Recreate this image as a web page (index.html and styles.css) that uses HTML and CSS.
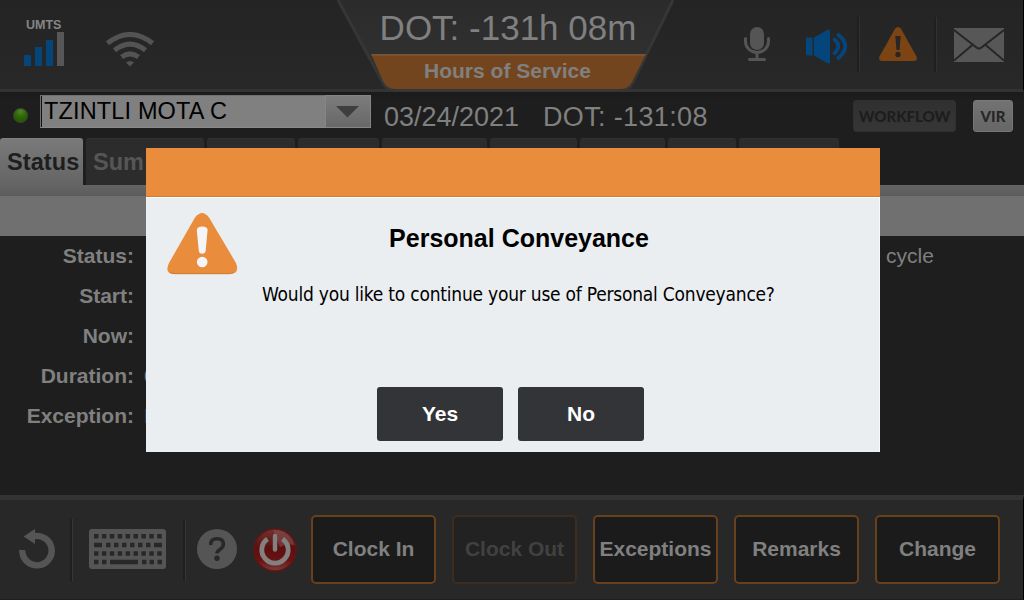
FILE: index.html
```html
<!DOCTYPE html>
<html lang="en">
<head>
<meta charset="utf-8">
<title>Hours of Service</title>
<link rel="stylesheet" href="styles.css">
</head>
<body>
<div class="screen">
  <header class="topbar">
    <div class="top-left">
      <div class="signal">
        <span class="signal-label">UMTS</span>
        <svg width="42" height="34" viewBox="0 0 42 34"><path fill="#04467c" d="M0 23h7v11H0zM11 15h7v19h-7zM22 8h7v26h-7z"/><path fill="#575757" d="M33 0h7v34h-7z"/></svg>
      </div>
      <svg class="wifi" width="48" height="35" viewBox="0 0 48 35"><g fill="none" stroke="#535353" stroke-width="5"><path d="M1.500 11.300Q24 -6.300 46.500 11.300"/><path d="M8.500 18.300Q24 6 39.500 18.300"/><path d="M15.500 25Q24 18.800 32.500 25"/></g><path fill="#535353" d="M20 30.500Q24 27.500 28 30.500L24 34.500z"/></svg>
    </div>
    <div class="top-center">
      <svg class="plate" width="345" height="92" viewBox="0 0 345 92">
        <defs><linearGradient id="pg" x1="0" y1="0" x2="0" y2="1"><stop offset="0" stop-color="#2b2b2b"/><stop offset="1" stop-color="#333"/></linearGradient></defs>
        <path d="M3 0L48 83Q52 90.500 60 90.500H285Q294 90.500 298 82L338 0" fill="url(#pg)" stroke="#363636" stroke-width="3"/>
        <path d="M36 54H311L297.500 81Q294 89 286 89H60Q52 89 48.500 82z" fill="#73451e"/>
        <path d="M36 54H311L310 56H37z" fill="#7b5230"/>
      </svg>
      <div class="clock">DOT: -131h 08m</div>
      <div class="mode">Hours of Service</div>
    </div>
    <div class="top-right">
      <svg class="mic" width="26" height="35" viewBox="0 0 26 35"><rect x="6" y="0" width="14" height="23" rx="7" fill="#555"/><path d="M1.500 11.500v3a11.500 11 0 0 0 23 0v-3" fill="none" stroke="#555" stroke-width="3" stroke-linecap="round"/><path d="M13 26v6M5.500 32.500h15" fill="none" stroke="#555" stroke-width="3" stroke-linecap="round"/></svg>
      <svg class="speaker" width="42" height="35" viewBox="0 0 42 35"><path fill="#04467c" d="M1 8.500h5.600v18H1q-1 0-1-1v-16q0-1 1-1zM8 8.500L21.500 .8Q24 -.3 24 2v31q0 2.300-2.500 1.200L8 26.500z"/><g fill="none" stroke="#04467c" stroke-width="4" stroke-linecap="round"><path d="M28.500 10.500q7.500 6.500 0 13.500"/><path d="M32.500 6q13.500 11 0 23"/></g></svg>
      <i class="sep"></i>
      <svg class="warn" width="38" height="34" viewBox="0 0 38 34"><path fill="#7c4413" d="M16 1.800Q19 -1.800 22 1.800L37.500 29.500Q39 34 35 34H3Q-1 34 .5 29.500z"/><path fill="#262626" d="M16.300 9h5.400l-1.200 14h-3z"/><circle cx="19" cy="27.500" r="2.700" fill="#262626"/></svg>
      <i class="sep sep2"></i>
      <svg class="mail" width="50" height="34" viewBox="0 0 50 34"><path fill="#575757" d="M0 0h50v34H0z"/><path d="M0 2L22.500 19.500q2.500 2 5 0L50 2M0 32.500L19 16.500M50 32.500L31 16.500" fill="none" stroke="#262626" stroke-width="2"/></svg>
    </div>
  </header>

  <div class="driverbar">
    <i class="led"></i>
    <div class="select"><span class="select-text">TZINTLI MOTA C</span><span class="select-btn"><svg width="24" height="12" viewBox="0 0 24 12"><path fill="#3e3e3e" d="M0 0h23L11.500 11.500z"/></svg></span></div>
    <span class="date">03/24/2021</span>
    <span class="dot">DOT: -131:08</span>
    <span class="chip workflow">WORKFLOW</span>
    <span class="chip vir">VIR</span>
  </div>

  <nav class="tabs">
    <div class="tab active">Status</div>
    <div class="tab t1">Sum</div>
    <div class="tab t2"></div><div class="tab t3"></div><div class="tab t4"></div><div class="tab t5"></div><div class="tab t6"></div><div class="tab t7"></div><div class="tab t8"></div>
  </nav>
  <div class="strip"></div>
  <div class="band"></div>

  <main class="details">
    <div class="row"><span class="label">Status:</span><span class="cycle">cycle</span></div>
    <div class="row"><span class="label">Start:</span></div>
    <div class="row"><span class="label">Now:</span></div>
    <div class="row"><span class="label">Duration:</span><span class="value">0</span></div>
    <div class="row"><span class="label">Exception:</span><span class="value">N</span></div>
  </main>

  <footer class="bottombar">
    <svg class="undo" width="36" height="40" viewBox="0 0 36 40"><path d="M3.300 21A14.700 14.700 0 1 0 14 7.500" fill="none" stroke="#555" stroke-width="6.400"/><path fill="#555" d="M4.500 7.500L16 0v15z"/></svg>
    <i class="fsep"></i>
    <svg class="keyboard" width="77" height="40" viewBox="0 0 77 40"><rect width="77" height="40" rx="3" fill="#555"/><g stroke="#282828" stroke-width="4.400" fill="none"><path d="M5 7.200h68" stroke-dasharray="4.500 3.400"/><path d="M5 16h8M17 16h4.500M25 16h4.500M33 16h4.500M41 16h4.500M49 16h4.500M57 16h4.500M65 16h8"/><path d="M5 24.500h68" stroke-dasharray="4.500 3.400"/><path d="M5 33h4.500M13 33h4.500M21 33h28M53 33h4.500M60.500 33h4.500M68.500 33h4.500"/></g></svg>
    <i class="fsep fsep2"></i>
    <svg class="help" width="40" height="40" viewBox="0 0 40 40"><circle cx="20" cy="20" r="20" fill="#555"/><path d="M13.800 16q-.6-6.300 6.300-6.300 6.300 0 6.300 5.300 0 3-3.300 5.200-3.200 2.200-3.200 4.300" fill="none" stroke="#282828" stroke-width="3.500"/><circle cx="20" cy="29.300" r="2.700" fill="#282828"/></svg>
    <svg class="power" width="44" height="46" viewBox="0 0 44 46"><defs><linearGradient id="rg" x1="0" y1="0" x2="0" y2="1"><stop offset="0" stop-color="#703332"/><stop offset=".45" stop-color="#5c0f0f"/><stop offset=".75" stop-color="#6b1212"/><stop offset="1" stop-color="#764240"/></linearGradient></defs><circle cx="22" cy="23" r="21" fill="url(#rg)" stroke="#651414" stroke-width="1.500"/><path d="M20 3A20 20 0 0 1 41.500 18Q34 16.500 27 20z" fill="#875555" opacity=".5"/><path d="M14.500 12A13.200 13.200 0 1 0 29.500 12" fill="none" stroke="#858080" stroke-width="4.800"/><path d="M22 9v13.500" stroke="#858080" stroke-width="4.400" stroke-linecap="round"/></svg>
    <div class="actions">
      <div class="action">Clock In</div>
      <div class="action disabled">Clock Out</div>
      <div class="action">Exceptions</div>
      <div class="action">Remarks</div>
      <div class="action">Change</div>
    </div>
  </footer>

  <section class="dialog">
    <div class="dialog-head"></div>
    <div class="dialog-body">
      <svg class="alert" width="71" height="62" viewBox="0 0 71 62"><path fill="#e98d3d" d="M28 4.500Q35 -4.500 42 4.500L69 50Q73 60.500 63 61H7Q-3 60.500 2 50z"/><path d="M3 59Q5 60.700 8 60.700H62Q65 60.700 67 59" fill="none" stroke="#cf7b32"/><path fill="#f3f5f7" d="M29.800 17q.3-3.600 5.400-3.600t5.400 3.600l-2 21q-.5 2.800-3.400 2.800T31.800 38z"/><circle cx="35.200" cy="49" r="5.300" fill="#f3f5f7"/></svg>
      <h1 class="title">Personal Conveyance</h1>
      <p class="message">Would you like to continue your use of Personal Conveyance?</p>
      <div class="choices"><button class="choice">Yes</button><button class="choice">No</button></div>
    </div>
  </section>
</div>
</body>
</html>
```

FILE: styles.css
```css
* { box-sizing: border-box; }
body { margin: 0; background: #1e1e1e; font-family: "Liberation Sans", Arial, sans-serif; }
svg { display: block; flex: none; }
.screen { position: relative; width: 1024px; height: 600px; overflow: hidden; display: flex; flex-direction: column; background: #1e1e1e; color: #808080; }

.topbar { height: 92px; flex: none; display: grid; grid-template-columns: 335px 345px 343px; background: linear-gradient(#242424, #282828); border-bottom: 3px solid #333; border-right: 1px solid #000; }
.top-left { display: flex; padding-left: 24px; align-items: flex-start; }
.signal { width: 42px; padding-top: 19px; }
.signal-label { display: block; font-size: 12.5px; line-height: 13px; font-weight: bold; color: #858585; padding-left: 2px; }
.wifi { margin: 32px 0 0 40px; }
.top-center { position: relative; text-align: center; height: 92px; }
.plate { position: absolute; left: 0; top: 0; }
.clock { position: relative; font-size: 35px; line-height: 54px; padding: 1px 0 0 1px; white-space: nowrap; }
.mode { position: relative; font-size: 21px; line-height: 32px; font-weight: bold; }
.top-right { display: flex; align-items: flex-start; padding-left: 64px; }
.mic { margin-top: 27px; }
.speaker { margin: 29px 0 0 36px; }
.sep { width: 3px; height: 55px; margin: 17px 0 0 9px; border-left: 2px solid #1f1f1f; border-right: 1px solid #313131; }
.warn { margin: 27px 0 0 19px; }
.sep2 { margin-left: 17px; }
.mail { margin: 28px 0 0 17px; }

.driverbar { height: 46px; flex: none; display: flex; align-items: flex-start; background: linear-gradient(#1b1b1b, #1e1e1e 8px); padding-left: 13px; }
.led { width: 15px; height: 15px; margin-top: 16px; border-radius: 50%; border: 1px solid #3b4a32; background: radial-gradient(circle at 50% 20%, #52852c, #2c6803 45%, #225100); }
.select { width: 331px; height: 33px; margin: 3px 0 0 12px; display: flex; background: #808080; border: 1px solid #707070; border-bottom-color: #8a8a8a; border-right: 0; }
.select-text { flex: 1; border-left: 1px solid #111; padding-left: 2px; font-size: 23.5px; line-height: 31px; letter-spacing: .15px; color: #000; white-space: nowrap; }
.select-btn { width: 46px; margin: -1px 0; border: 1px solid #858585; background: linear-gradient(#7c7c7c, #686868); display: flex; align-items: center; justify-content: center; }
.date, .dot { flex: none; font-size: 27px; line-height: 32px; margin-top: 9px; white-space: nowrap; }
.date { width: 147px; margin-left: 13px; }
.dot { width: 295px; margin-left: 12px; letter-spacing: .35px; }
.chip { flex: none; height: 32px; margin-top: 8px; border-radius: 3px; border: 1px solid #303030; background: linear-gradient(#303030, #363636); font: 900 15px/31px Lato, sans-serif; color: #1d1d1d; text-align: center; }
.workflow { width: 103px; margin-left: 15px; }
.vir { width: 40px; margin-left: 17px; background: linear-gradient(#737373, #666); border-color: #777; color: #262626; }

.tabs { height: 47px; flex: none; display: flex; gap: 3px; }
.tab { height: 47px; border-radius: 3px 3px 0 0; background: #2c2c2c; border-top: 1px solid #323232; font-size: 23.5px; line-height: 46px; font-weight: bold; color: #565656; padding-left: 7px; overflow: hidden; }
.active { width: 83px; background: linear-gradient(#7a7a7a, #646464); color: #1e1e1e; border-top-color: #808080; letter-spacing: .1px; }
.t1 { width: 118px; } .t2 { width: 88px; } .t3 { width: 81px; } .t4 { width: 105px; } .t5 { width: 87px; } .t6 { width: 85px; } .t7 { width: 68px; } .t8 { width: 100px; }
.strip { height: 11px; flex: none; background: linear-gradient(#646464, #5c5c5c); }
.band { height: 40px; flex: none; background: #707070; }

.details { flex: 1; }
.row { display: flex; height: 40px; font-size: 21px; line-height: 40px; }
.label { width: 134px; text-align: right; font-weight: bold; }
.value { padding-left: 10px; }
.cycle { padding-left: 752px; }

.bottombar { height: 105px; flex: none; display: flex; align-items: flex-start; background: #282828; border-top: 5px solid #333; border-right: 1px solid #000; border-bottom: 1px solid #1f1f1f; padding-left: 19px; }
.undo { margin-top: 29px; }
.fsep { width: 3px; height: 62px; margin: 19px 0 0 15px; border-left: 2px solid #1f1f1f; border-right: 1px solid #363636; }
.keyboard { margin: 29px 0 0 16px; }
.fsep2 { margin-left: 17px; }
.help { margin: 29px 0 0 11px; }
.power { margin: 27px 0 0 16px; }
.actions { display: flex; gap: 16px; margin: 15px 0 0 14px; }
.action { width: 125px; height: 69px; border: 2px solid #68401c; border-radius: 5px; background: #1b1b1b; font-size: 21px; line-height: 64px; font-weight: bold; text-align: center; white-space: nowrap; }
.disabled { background: #222; border-color: #3e2c1e; color: #414141; }

.dialog { position: absolute; left: 146px; top: 148px; width: 734px; height: 304px; background: #ebeef1; color: #000; }
.dialog-head { height: 49px; background: #e98d3d; border-bottom: 1px solid #cf7d36; }
.dialog-body { height: 255px; border-top: 1px solid #fff; border-right: 1px solid #f8f9fa; display: grid; grid-template-columns: 92px 1fr; grid-template-rows: 76px 113px 54px; }
.alert { margin: 15px 0 0 21px; }
.title { margin: 0 79px 0 0; font-size: 25px; line-height: 80px; text-align: center; white-space: nowrap; }
.message { grid-column: 1 / 3; margin: 2px 0 0 116px; font: 19px/36px "DejaVu Sans Condensed", "DejaVu Sans", sans-serif; font-stretch: condensed; letter-spacing: -.22px; white-space: nowrap; }
.choices { grid-column: 1 / 3; display: flex; gap: 15px; padding-left: 231px; }
.choice { width: 126px; height: 54px; border: 0; border-radius: 3px; background: #333437; color: #fff; font: bold 21px "Liberation Sans", Arial, sans-serif; padding: 0; }
```
